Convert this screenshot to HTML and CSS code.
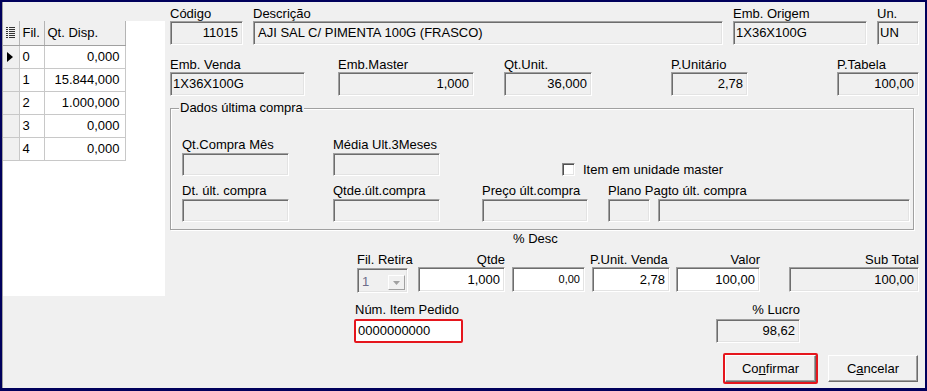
FILE: index.html
```html
<!DOCTYPE html>
<html lang="pt">
<head>
    <meta charset="UTF-8">
    <title>Item do pedido</title>
    <link rel="stylesheet" href="styles.css">
</head>
<body>
<div class="window">

    <div class="grid-panel">
        <div class="grid-area">
            <table class="grid">
                <thead>
                    <tr>
                        <th class="c-ind">
                            <svg width="9" height="12" viewBox="0 0 9 12">
                                <g fill="#333">
                                    <rect x="0" y="0" width="2" height="1"/><rect x="3" y="0" width="6" height="1"/>
                                    <rect x="0" y="2" width="2" height="1"/><rect x="3" y="2" width="6" height="1"/>
                                    <rect x="0" y="4" width="2" height="1"/><rect x="3" y="4" width="6" height="1"/>
                                    <rect x="0" y="6" width="2" height="1"/><rect x="3" y="6" width="6" height="1"/>
                                    <rect x="0" y="8" width="2" height="1"/><rect x="3" y="8" width="6" height="1"/>
                                    <rect x="0" y="10" width="2" height="1"/><rect x="3" y="10" width="6" height="1"/>
                                </g>
                            </svg>
                        </th>
                        <th class="c-fil">Fil.</th>
                        <th class="c-qt">Qt. Disp.</th>
                    </tr>
                </thead>
                <tbody>
                    <tr>
                        <td class="c-ind"><svg width="6" height="10" viewBox="0 0 6 10"><path d="M0 0L6 5L0 10Z" fill="#000"/></svg></td>
                        <td>0</td><td class="num">0,000</td>
                    </tr>
                    <tr><td class="c-ind"></td><td>1</td><td class="num">15.844,000</td></tr>
                    <tr><td class="c-ind"></td><td>2</td><td class="num">1.000,000</td></tr>
                    <tr><td class="c-ind"></td><td>3</td><td class="num">0,000</td></tr>
                    <tr><td class="c-ind"></td><td>4</td><td class="num">0,000</td></tr>
                </tbody>
            </table>
        </div>
    </div>

    <div class="form">

        <div class="row row-1">
            <div class="field f-codigo"><label>Código</label><div class="box right">11015</div></div>
            <div class="field f-desc"><label>Descrição</label><div class="box">AJI SAL C/ PIMENTA 100G (FRASCO)</div></div>
            <div class="field f-origem"><label>Emb. Origem</label><div class="box tight">1X36X100G</div></div>
            <div class="field f-un"><label>Un.</label><div class="box tight">UN</div></div>
        </div>

        <div class="row row-2">
            <div class="field f-venda"><label>Emb. Venda</label><div class="box tight">1X36X100G</div></div>
            <div class="field f-master"><label>Emb.Master</label><div class="box right">1,000</div></div>
            <div class="field f-qtunit"><label>Qt.Unit.</label><div class="box right">36,000</div></div>
            <div class="field f-punit"><label>P.Unitário</label><div class="box right">2,78</div></div>
            <div class="field f-ptabela"><label>P.Tabela</label><div class="box right">100,00</div></div>
        </div>

        <div class="group">
            <span class="group-caption">Dados última compra</span>
            <div class="row row-a">
                <div class="field g-col1"><label>Qt.Compra Mês</label><div class="box small"></div></div>
                <div class="field g-col2"><label>Média Ult.3Meses</label><div class="box small"></div></div>
                <div class="check">
                    <span class="check-box"></span>
                    <span class="check-label">Item em unidade master</span>
                </div>
            </div>
            <div class="row row-b">
                <div class="field g-col1"><label>Dt. últ. compra</label><div class="box small"></div></div>
                <div class="field g-col2"><label>Qtde.últ.compra</label><div class="box small"></div></div>
                <div class="field g-col3"><label>Preço últ.compra</label><div class="box small"></div></div>
                <div class="field g-col4">
                    <label>Plano Pagto últ. compra</label>
                    <div class="box-pair">
                        <div class="box small plano-cod"></div>
                        <div class="box small plano-desc"></div>
                    </div>
                </div>
            </div>
        </div>

        <div class="desc-caption">% Desc</div>

        <div class="row row-venda">
            <div class="field f-filretira">
                <label>Fil. Retira</label>
                <div class="combo">
                    <span class="combo-text">1</span>
                    <span class="combo-btn"><svg width="7" height="4" viewBox="0 0 7 4"><path d="M0 0H7L3.5 4Z" fill="#a0a0a0"/></svg></span>
                </div>
            </div>
            <div class="field f-qtde"><label class="lbl-right">Qtde</label><div class="box edit right">1,000</div></div>
            <div class="field f-pdesc"><label>&nbsp;</label><div class="box edit right tiny">0,00</div></div>
            <div class="field f-punitv"><label class="lbl-pull">P.Unit. Venda</label><div class="box edit right">2,78</div></div>
            <div class="field f-valor"><label class="lbl-right">Valor</label><div class="box edit right">100,00</div></div>
            <div class="field f-subtotal"><label class="lbl-right">Sub Total</label><div class="box right">100,00</div></div>
        </div>

        <div class="row row-pedido">
            <div class="field f-numitem"><label>Núm. Item Pedido</label><div class="highlight-box"><div class="box edit numitem">0000000000</div></div></div>
            <div class="field f-lucro"><label class="lbl-right">% Lucro</label><div class="box right">98,62</div></div>
        </div>

        <div class="row row-buttons">
            <div class="highlight-btn"><button class="btn">Co<u>n</u>firmar</button></div>
            <button class="btn btn-cancel">C<u>a</u>ncelar</button>
        </div>

    </div>
</div>
</body>
</html>
```

FILE: styles.css
```css
* {
    box-sizing: border-box;
}
body {
    margin: 0;
    font-family: "Liberation Sans", Arial, sans-serif;
    font-size: 13px;
    color: #000;
    background-color: #f0f0f0;
}
.window {
    display: flex;
    width: 927px;
    height: 391px;
    border: 2px solid #00005c;
    border-bottom-width: 3px;
    background-color: #f0f0f0;
}

/* grade de filiais */
.grid-panel {
    width: 163px;
    flex-shrink: 0;
    border-left: 1px solid #a0a0a0;
    padding-top: 19px;
}
.grid-area {
    height: 275px;
    background-color: #fff;
}
.grid {
    border-collapse: collapse;
    table-layout: fixed;
    width: 122px;
}
.grid th, .grid td {
    padding: 0 3px;
    white-space: nowrap;
    overflow: hidden;
}
.grid th {
    height: 24px;
    font-weight: normal;
    text-align: left;
    background-color: #f0f0f0;
    border-right: 1px solid #b4b4b4;
    border-bottom: 1px solid #a0a0a0;
}
.grid td {
    height: 23px;
    border-right: 1px solid #c8c8c8;
    border-bottom: 1px solid #c8c8c8;
}
.grid .c-ind {
    width: 16px;
    padding: 0 0 0 3px;
    background-color: #f0f0f0;
    line-height: 0;
}
.grid td.c-ind {
    padding-left: 4px;
}
.c-fil {
    width: 25px;
}
.c-qt {
    width: 81px;
}
.grid .num {
    text-align: right;
    padding-right: 5px;
}

/* formulario */
.form {
    margin-left: 5px;
    width: 755px;
}
.row {
    display: flex;
    align-items: flex-start;
}
.field {
    display: flex;
    flex-direction: column;
}
.field label {
    height: 15px;
    line-height: 15px;
    white-space: nowrap;
}
.box {
    height: 24px;
    line-height: 22px;
    padding: 0 4px;
    border: 1px solid;
    border-color: #a0a0a0 #fff #fff #a0a0a0;
    box-shadow: inset 1px 1px 0 #6d6d6d, inset -1px -1px 0 #e3e3e3;
    background-color: #f0f0f0;
    white-space: nowrap;
    overflow: hidden;
}
.box.right {
    text-align: right;
}
.box.tight {
    padding-left: 2px;
}
.box.small {
    height: 23px;
}
.box.edit {
    background-color: #fff;
}
.box.tiny {
    font-size: 11px;
}

.row-1 {
    margin-top: 4px;
}
.f-codigo { width: 73px; }
.f-desc { width: 470px; margin-left: 10px; }
.f-origem { width: 134px; margin-left: 10px; }
.f-un { width: 42px; margin-left: 10px; }

.row-2 {
    margin-top: 12px;
}
.f-venda { width: 135px; }
.f-master { width: 136px; margin-left: 33px; }
.f-qtunit { width: 88px; margin-left: 30px; }
.f-punit { width: 77px; margin-left: 79px; }
.f-ptabela { width: 82px; margin-left: 89px; }

/* Dados última compra */
.group {
    position: relative;
    width: 744px;
    height: 122px;
    margin-top: 12px;
    padding-top: 28px;
    border: 1px solid #a0a0a0;
    box-shadow: inset 1px 1px 0 #fff, 1px 1px 0 #fff;
}
.group-caption {
    position: absolute;
    top: -9px;
    left: 8px;
    padding: 0 1px;
    line-height: 15px;
    background-color: #f0f0f0;
}
.row-a .field label,
.row-b .field label {
    margin-bottom: 1px;
}
.row-b {
    margin-top: 6px;
}
.g-col1 { width: 107px; margin-left: 11px; }
.g-col2 { width: 107px; margin-left: 44px; }
.g-col3 { width: 106px; margin-left: 42px; }
.g-col4 { margin-left: 20px; }
.box-pair {
    display: flex;
    gap: 8px;
}
.plano-cod { width: 42px; }
.plano-desc { width: 252px; }

.check {
    display: flex;
    align-items: center;
    margin-left: 122px;
    margin-top: 25px;
}
.check-box {
    width: 13px;
    height: 13px;
    background-color: #fff;
    border: 1px solid;
    border-color: #8a8a8a #fff #fff #8a8a8a;
    box-shadow: inset 1px 1px 0 #505050, inset -1px -1px 0 #e3e3e3;
}
.check-label {
    margin-left: 8px;
    line-height: 15px;
}

/* venda */
.desc-caption {
    margin-top: 1px;
    margin-left: 343px;
    line-height: 15px;
}
.row-venda {
    margin-top: 6px;
}
.lbl-right {
    text-align: right;
}
.lbl-pull {
    margin-left: -2px;
}
.f-filretira { width: 51px; margin-left: 187px; }
.f-qtde { width: 87px; margin-left: 10px; }
.f-pdesc { width: 73px; margin-left: 7px; }
.f-punitv { width: 78px; margin-left: 7px; }
.f-valor { width: 84px; margin-left: 6px; }
.f-subtotal { width: 130px; margin-left: 29px; }
.row-venda .box {
    height: 25px;
    line-height: 23px;
}
.combo {
    display: flex;
    height: 25px;
    margin-top: 1px;
    padding: 2px;
    border: 1px solid;
    border-color: #a0a0a0 #fff #fff #a0a0a0;
    box-shadow: inset 1px 1px 0 #6d6d6d, inset -1px -1px 0 #e3e3e3;
}
.combo-text {
    flex: 1;
    padding-left: 2px;
    padding-top: 3px;
    color: #6d6d8a;
}
.combo-btn {
    display: flex;
    align-items: center;
    justify-content: center;
    width: 17px;
    margin-top: 4px;
    background-color: #f0f0f0;
    border: 1px solid;
    border-color: #fff #a0a0a0 #a0a0a0 #fff;
}

.row-pedido {
    margin-top: 9px;
}
.f-numitem { width: 109px; margin-left: 184px; }
.f-numitem label {
    margin-left: 1px;
    margin-bottom: 2px;
}
.highlight-box {
    border: 2px solid #e5161d;
    border-radius: 2px;
}
.box.numitem {
    height: 20px;
    line-height: 20px;
    padding-left: 2px;
    border: none;
    box-shadow: none;
}
.f-lucro { width: 84px; margin-left: 253px; }
.f-lucro label {
    margin-bottom: 2px;
}

/* botões */
.row-buttons {
    margin-top: 10px;
}
.highlight-btn {
    width: 95px;
    margin-left: 553px;
    border: 2px solid #e5161d;
    border-radius: 2px;
}
.btn {
    display: block;
    width: 100%;
    height: 27px;
    padding: 0;
    font-family: "Liberation Sans", Arial, sans-serif;
    font-size: 13px;
    color: #000;
    background-color: #f0f0f0;
    border: 1px solid;
    border-color: #fff #6d6d6d #6d6d6d #fff;
    box-shadow: inset -1px -1px 0 #a0a0a0;
}
.btn-cancel {
    width: 90px;
    margin-left: 10px;
    margin-top: 2px;
}
```
